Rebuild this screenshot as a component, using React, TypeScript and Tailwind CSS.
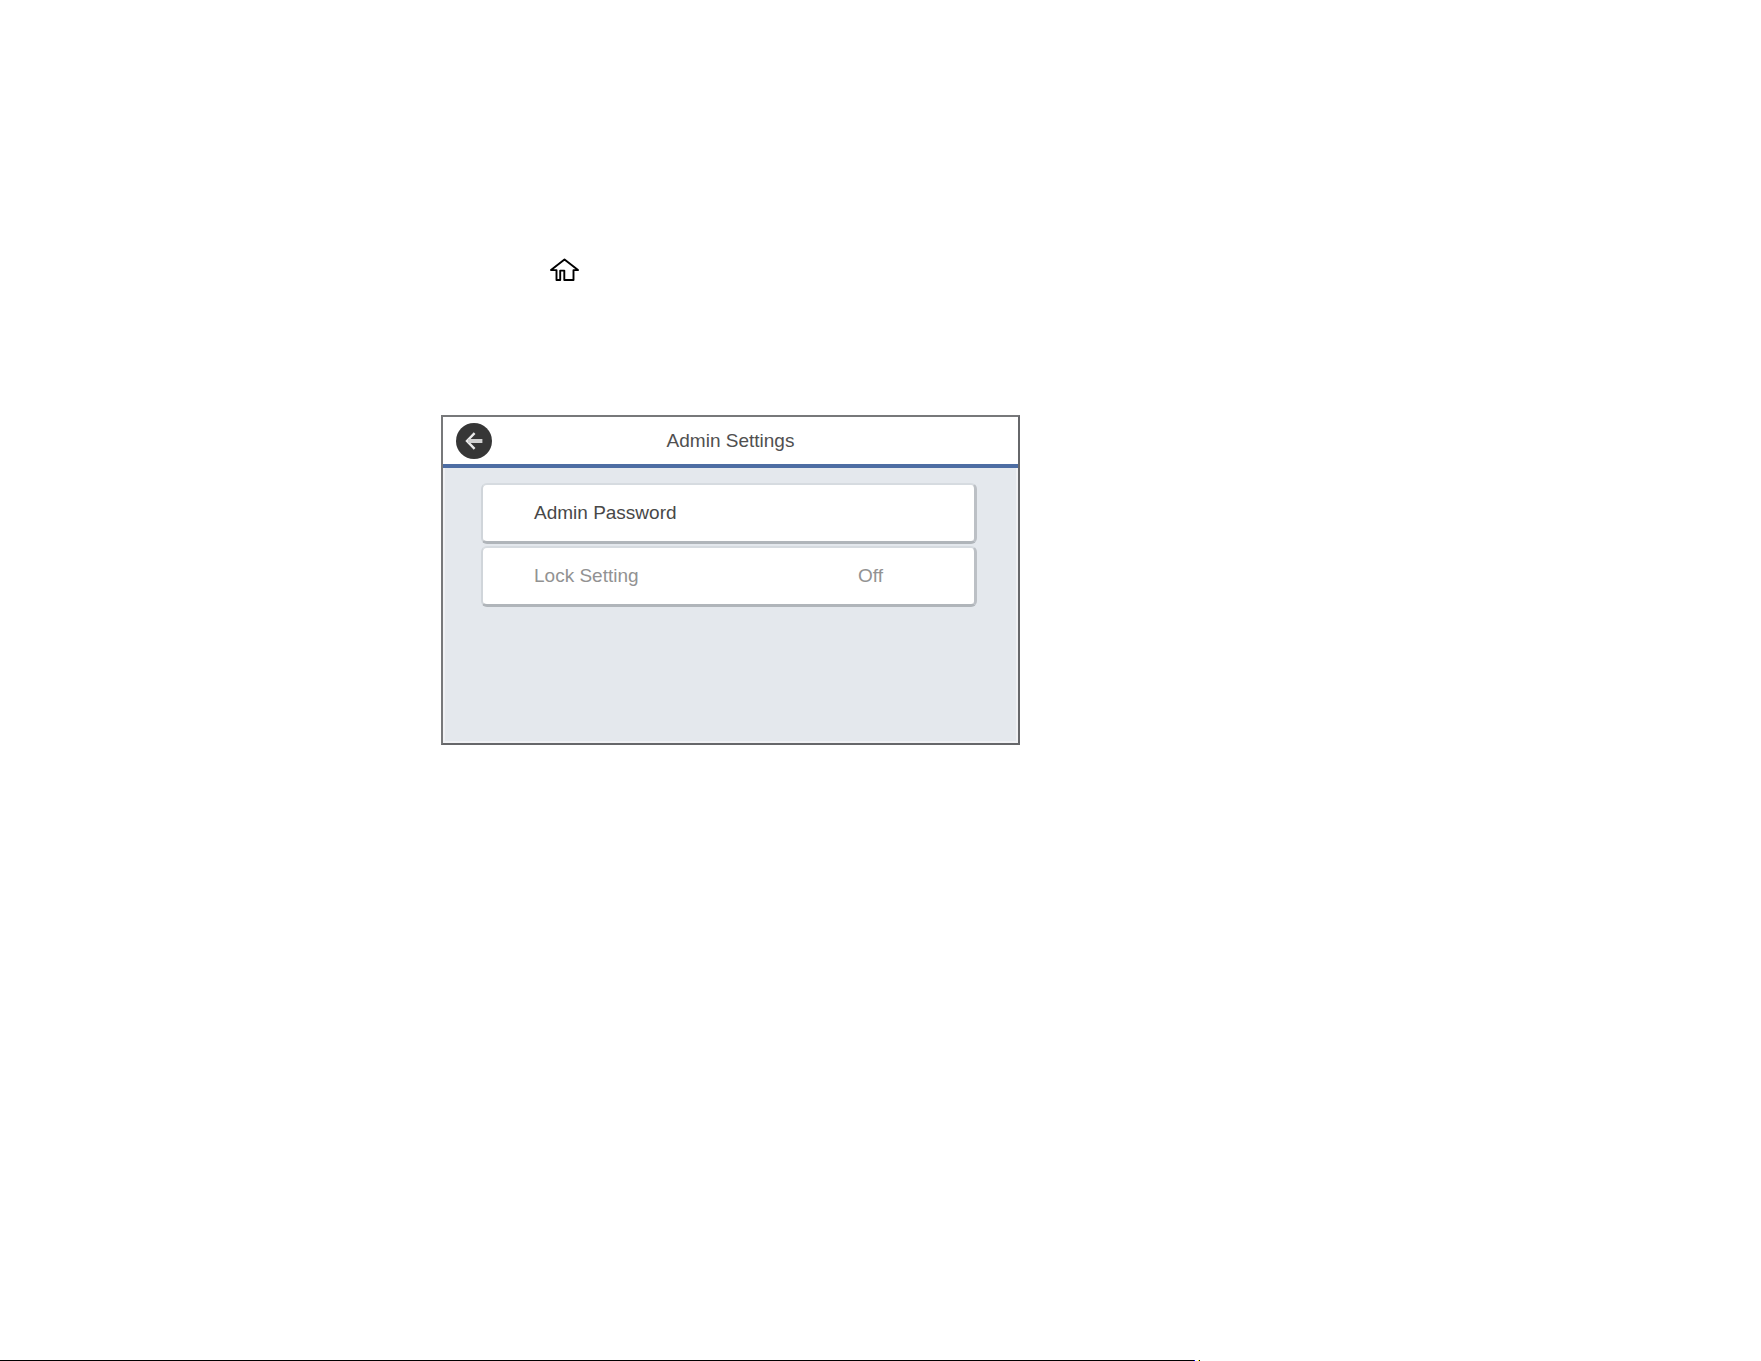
function HomeIcon() {
  return (
    <svg
      className="h-6 w-8"
      viewBox="0 0 32 24"
      fill="none"
      stroke="#000"
      strokeWidth="1.9"
      strokeLinejoin="round"
      aria-label="Home"
      role="img"
    >
      <path d="M16.5 1.4 L30 12.1 H25.5 V22 H16.3 V12.6 H12.2 V22 H8.5 V12.1 H3 Z" />
    </svg>
  );
}

function BackIcon() {
  return (
    <svg className="h-9 w-9" viewBox="0 0 36 36" fill="none" aria-hidden="true">
      <circle cx="18" cy="18" r="18" fill="#363636" />
      <path d="M18.6 10.2 L11 18 L18.6 25.8" stroke="#ececec" strokeWidth="2.4" />
      <path d="M12 18 H26.4" stroke="#d0d0d0" strokeWidth="4" />
    </svg>
  );
}

const card =
  "flex h-[61px] w-full items-center rounded-md border-2 border-t-[#d6dbe0] border-l-[#d0d5da] border-r-[#bcc0c5] border-b-[#b0b5ba] border-r-[3px] border-b-[3px] bg-white pl-[51px] pr-[91px] text-left";

export default function App() {
  return (
    <div className="flex min-h-screen flex-col bg-white font-['Liberation_Sans',Arial,sans-serif] text-[19px] leading-6">
      <main className="flex flex-col pl-[441px] pt-[258px]">
        <div className="pl-[107px]">
          <HomeIcon />
        </div>
        <section
          aria-labelledby="screen-title"
          className="mt-[133px] flex min-h-[330px] w-full max-w-[579px] flex-col border-2 border-l-[#77787a] border-t-[#77787a] border-r-[#66676a] border-b-[#66676a] bg-white"
        >
          <header className="grid h-[51px] grid-cols-[1fr_auto_1fr] items-center border-b-4 border-[#4d6da3] px-[13px]">
            <button type="button" aria-label="Back" className="w-9 rounded-full">
              <BackIcon />
            </button>
            <h1 id="screen-title" className="text-[#505050]">
              Admin Settings
            </h1>
          </header>
          <div className="flex flex-1 flex-col gap-[2px] border-x-2 border-b-2 border-[#f0f1f4] bg-[#e4e8ed] pl-9 pr-[39px] pt-[15px]">
            <button type="button" className={card}>
              <span className="text-[#484848]">Admin Password</span>
            </button>
            <button type="button" disabled className={card + " justify-between text-[#929292]"}>
              <span>Lock Setting</span>
              <span>Off</span>
            </button>
          </div>
        </section>
      </main>
      <footer className="mt-auto flex h-px w-full">
        <div className="w-[1194px] bg-black" />
        <div className="w-px bg-[#0000ff]" />
        <div className="ml-[3px] w-px bg-[#ffff00]" />
        <div className="w-px bg-black" />
      </footer>
    </div>
  );
}
